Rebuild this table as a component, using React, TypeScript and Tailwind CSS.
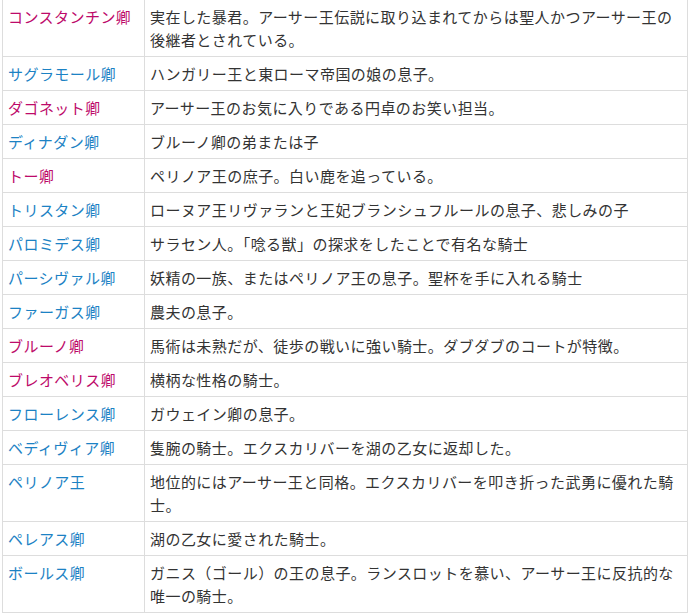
const PINK = "text-[#bd0a6a]";
const BLUE = "text-[#1c82c4]";

type Row = { name: string; pink?: boolean; desc: React.ReactNode };

const rows: Row[] = [
  {
    name: "コンスタンチン卿",
    pink: true,
    desc: (
      <>
        実在した暴君。アーサー王伝説に取り込まれてからは聖人かつアーサー王の
        <br />
        後継者とされている。
      </>
    ),
  },
  { name: "サグラモール卿", desc: "ハンガリー王と東ローマ帝国の娘の息子。" },
  { name: "ダゴネット卿", pink: true, desc: "アーサー王のお気に入りである円卓のお笑い担当。" },
  { name: "ディナダン卿", desc: "ブルーノ卿の弟または子" },
  { name: "トー卿", pink: true, desc: "ペリノア王の庶子。白い鹿を追っている。" },
  { name: "トリスタン卿", desc: "ローヌア王リヴァランと王妃ブランシュフルールの息子、悲しみの子" },
  { name: "パロミデス卿", desc: "サラセン人。「唸る獣」の探求をしたことで有名な騎士" },
  { name: "パーシヴァル卿", desc: "妖精の一族、またはペリノア王の息子。聖杯を手に入れる騎士" },
  { name: "ファーガス卿", desc: "農夫の息子。" },
  { name: "ブルーノ卿", pink: true, desc: "馬術は未熟だが、徒歩の戦いに強い騎士。ダブダブのコートが特徴。" },
  { name: "ブレオベリス卿", pink: true, desc: "横柄な性格の騎士。" },
  { name: "フローレンス卿", desc: "ガウェイン卿の息子。" },
  { name: "ベディヴィア卿", desc: "隻腕の騎士。エクスカリバーを湖の乙女に返却した。" },
  {
    name: "ペリノア王",
    desc: (
      <>
        地位的にはアーサー王と同格。エクスカリバーを叩き折った武勇に優れた騎
        <br />
        士。
      </>
    ),
  },
  { name: "ペレアス卿", desc: "湖の乙女に愛された騎士。" },
  {
    name: "ボールス卿",
    desc: (
      <>
        ガニス（ゴール）の王の息子。ランスロットを慕い、アーサー王に反抗的な
        <br />
        唯一の騎士。
      </>
    ),
  },
];

export default function App() {
  return (
    <div className="bg-white min-h-[613px] pl-[2px] font-['Noto_Sans_CJK_JP','Noto_Sans',sans-serif] text-[15px] leading-[23px] tracking-[0.45px] text-[#333]">
      <table className="-mt-px w-[686px] border-collapse">
        <tbody>
          {rows.map((r) => (
            <tr key={r.name}>
              <td
                className={`w-[142px] border border-[#ddd] px-[5px] py-[5px] align-top whitespace-nowrap ${
                  r.pink ? PINK : BLUE
                }`}
              >
                {r.name}
              </td>
              <td className="border border-[#ddd] px-[5px] py-[5px] align-top">{r.desc}</td>
            </tr>
          ))}
        </tbody>
      </table>
    </div>
  );
}
